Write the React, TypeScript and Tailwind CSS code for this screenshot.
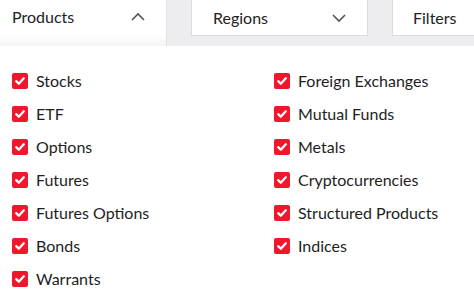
import React from "react";

const left = ["Stocks", "ETF", "Options", "Futures", "Futures Options", "Bonds", "Warrants"];
const right = ["Foreign Exchanges", "Mutual Funds", "Metals", "Cryptocurrencies", "Structured Products", "Indices"];

function Check({ label }: { label: string }) {
  return (
    <div className="flex h-[33px] items-center">
      <div className="flex h-[16px] w-[16px] items-center justify-center rounded-[2px] bg-[#f0162b]">
        <svg width="12" height="12" viewBox="0 0 12 12">
          <path d="M2.2 6.2 L4.8 8.7 L9.8 3.3" fill="none" stroke="white" strokeWidth="2.3" strokeLinecap="round" strokeLinejoin="round" />
        </svg>
      </div>
      <span className="ml-[8px] text-[16px] text-[#1e1e1e]">{label}</span>
    </div>
  );
}

export default function App() {
  return (
    <div className="h-[301px] w-[474px] overflow-hidden bg-white" style={{ fontFamily: "Lato, 'Open Sans', sans-serif" }}>
      <div className="flex h-[46px] bg-[#ededef]">
        <div className="flex h-full w-[167px] flex-col border-r border-[#e2e2e4] bg-white">
          <div className="flex h-[34px] items-center justify-between pl-[12px] pr-[20px]">
            <span className="text-[16px] text-[#222]">Products</span>
            <svg width="16" height="10" viewBox="0 0 16 10">
              <path d="M2 8 L8 2 L14 8" fill="none" stroke="#555" strokeWidth="1.6" />
            </svg>
          </div>
          <div className="flex-1 bg-gradient-to-b from-white to-[#f4f4f4]" />
        </div>
        <div className="ml-[24px] flex h-[36px] w-[177px] items-center justify-between border-x border-b border-[#dcdcdc] bg-white pl-[21px] pr-[20px]">
          <span className="text-[16px] text-[#222]">Regions</span>
          <svg width="16" height="10" viewBox="0 0 16 10">
            <path d="M2 2 L8 8 L14 2" fill="none" stroke="#555" strokeWidth="1.6" />
          </svg>
        </div>
        <div className="ml-[24px] flex h-[36px] flex-1 items-center border-l border-b border-[#dcdcdc] bg-white pl-[20px]">
          <span className="text-[16px] text-[#222]">Filters</span>
        </div>
      </div>
      <div className="flex pt-[18px]">
        <div className="w-[274px] pl-[12px]">
          {left.map((l) => (
            <Check key={l} label={l} />
          ))}
        </div>
        <div className="flex-1">
          {right.map((l) => (
            <Check key={l} label={l} />
          ))}
        </div>
      </div>
    </div>
  );
}
